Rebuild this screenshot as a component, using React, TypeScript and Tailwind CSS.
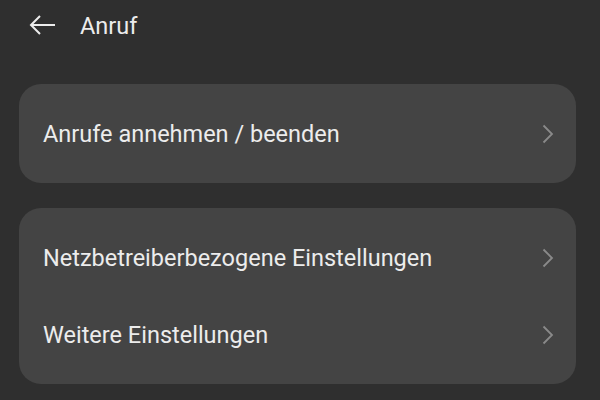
import React from "react";

function Chevron() {
  return (
    <svg width="12" height="20" viewBox="0 0 12 20" fill="none" className="flex-none">
      <path d="M1.5 1.5 L10 10 L1.5 18.5" stroke="#8a8a8a" strokeWidth="1.8" />
    </svg>
  );
}

function Row({ label }: { label: string }) {
  return (
    <div className="flex items-center justify-between h-[77px] pl-6 pr-[22px]">
      <span className="mt-[3px] text-[23.5px] text-[#ececec]">{label}</span>
      <Chevron />
    </div>
  );
}

export default function App() {
  return (
    <div
      className="w-[600px] h-[400px] overflow-hidden bg-[#2f2f2f]"
      style={{ fontFamily: "Roboto, 'Noto Sans', sans-serif" }}
    >
      <div className="flex items-center h-[50px] pl-[29px]">
        <svg width="27" height="20" viewBox="0 0 27 20" fill="none">
          <path d="M26 10 H2 M11 1 L2 10 L11 19" stroke="#ececec" strokeWidth="2" />
        </svg>
        <span className="ml-6 mt-[3px] text-[23.5px] text-[#ececec]">Anruf</span>
      </div>
      <div className="flex flex-col gap-[25px] pl-[19px] pr-6 pt-[34px]">
        <div className="rounded-[22px] bg-[#444444] py-[11px]">
          <Row label="Anrufe annehmen / beenden" />
        </div>
        <div className="rounded-[22px] bg-[#444444] py-[11px]">
          <Row label="Netzbetreiberbezogene Einstellungen" />
          <Row label="Weitere Einstellungen" />
        </div>
      </div>
    </div>
  );
}
